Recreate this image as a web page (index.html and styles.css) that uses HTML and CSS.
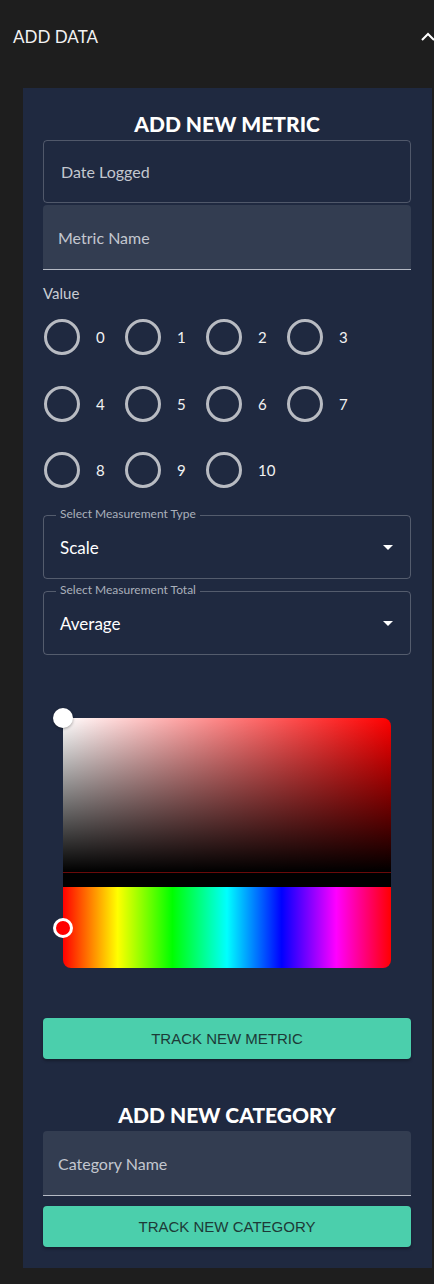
FILE: index.html
```html
<!DOCTYPE html>
<html>
<head>
<meta charset="utf-8">
<link rel="stylesheet" href="styles.css">
</head>
<body>
<div class="accordion">
  <div class="acc-head">
    <span class="acc-title">ADD DATA</span>
    <svg class="chev" width="14" height="10" viewBox="0 0 14 10"><path d="M1 8 L7 2 L13 8" fill="none" stroke="#fff" stroke-width="2"/></svg>
  </div>
  <div class="panel">
    <h2 class="section-title">ADD NEW METRIC</h2>
    <div class="outlined-input"><span class="ph">Date Logged</span></div>
    <div class="filled-input"><span class="ph">Metric Name</span></div>
    <div class="value-label">Value</div>
    <div class="radio-grid">
      <div class="radio"><span class="ring"></span><span class="rlabel">0</span></div>
      <div class="radio"><span class="ring"></span><span class="rlabel">1</span></div>
      <div class="radio"><span class="ring"></span><span class="rlabel">2</span></div>
      <div class="radio"><span class="ring"></span><span class="rlabel">3</span></div>
      <div class="radio"><span class="ring"></span><span class="rlabel">4</span></div>
      <div class="radio"><span class="ring"></span><span class="rlabel">5</span></div>
      <div class="radio"><span class="ring"></span><span class="rlabel">6</span></div>
      <div class="radio"><span class="ring"></span><span class="rlabel">7</span></div>
      <div class="radio"><span class="ring"></span><span class="rlabel">8</span></div>
      <div class="radio"><span class="ring"></span><span class="rlabel">9</span></div>
      <div class="radio"><span class="ring"></span><span class="rlabel">10</span></div>
    </div>
    <div class="select">
      <span class="slabel">Select Measurement Type</span>
      <span class="sval">Scale</span>
      <span class="arrow"></span>
    </div>
    <div class="select">
      <span class="slabel">Select Measurement Total</span>
      <span class="sval">Average</span>
      <span class="arrow"></span>
    </div>
    <div class="picker">
      <div class="sat"><span class="sat-handle"></span></div>
      <div class="band"></div>
      <div class="hue"><span class="hue-handle"></span></div>
    </div>
    <button class="btn btn-metric">TRACK NEW METRIC</button>
    <h2 class="section-title cat-title">ADD NEW CATEGORY</h2>
    <div class="filled-input cat-input"><span class="ph">Category Name</span></div>
    <button class="btn btn-cat">TRACK NEW CATEGORY</button>
  </div>
</div>
</body>
</html>
```
FILE: styles.css
```css
* { box-sizing: border-box; }
body {
  margin: 0;
  background: #1e1e1e;
  font-family: Lato, "Noto Sans", sans-serif;
  color: #fff;
  overflow: hidden;
}
.accordion { width: 434px; }
.acc-head {
  height: 88px;
  display: flex;
  align-items: flex-start;
  justify-content: space-between;
  padding: 26px 0 0 13px;
  overflow: hidden;
}
.acc-title {
  font-size: 17px;
  line-height: 22px;
  color: #f2f2f2;
}
.chev { margin-top: 6px; margin-right: -1px; }
.panel {
  margin: 0 2px 0 23px;
  background: #1f2940;
  padding: 20px 21px 20px 20px;
  height: 1180px;
}
.section-title {
  margin: 0;
  height: 32px;
  line-height: 32px;
  text-align: center;
  font-size: 21px;
  font-weight: 900;
  color: #fff;
}
.outlined-input {
  height: 63px;
  border: 1px solid rgba(255,255,255,0.22);
  border-radius: 4px;
  display: flex;
  align-items: center;
  padding-left: 17px;
}
.ph { font-size: 16px; color: #c3c7cf; }
.filled-input {
  margin-top: 2px;
  height: 65px;
  background: #333d51;
  border-radius: 4px 4px 0 0;
  border-bottom: 1px solid #b5bac4;
  display: flex;
  align-items: center;
  padding-left: 15px;
}
.value-label {
  margin-top: 12px;
  height: 22px;
  line-height: 22px;
  font-size: 15px;
  color: #c9cdd4;
}
.radio-grid {
  display: grid;
  grid-template-columns: repeat(4, 81px);
  grid-template-rows: 66.5px 66.5px 36px;
  margin-top: 15px;
}
.radio { display: flex; align-items: flex-start; }
.ring {
  width: 36px;
  height: 36px;
  margin-left: 1px;
  border: 3px solid #b8bbc2;
  border-radius: 50%;
}
.rlabel {
  margin-left: 16px;
  font-size: 15px;
  line-height: 36px;
  color: #f2f2f2;
}
.select {
  position: relative;
  height: 64px;
  margin-top: 27px;
  border: 1px solid rgba(255,255,255,0.24);
  border-radius: 4px;
  padding-left: 16px;
  display: flex;
  align-items: center;
}
.select + .select { margin-top: 12px; }
.slabel {
  position: absolute;
  left: 12px;
  top: -9px;
  padding: 0 4px;
  background: #1f2940;
  font-size: 12px;
  line-height: 14px;
  color: #aab0bb;
}
.sval { font-size: 17px; color: #fff; }
.arrow {
  position: absolute;
  right: 17px;
  top: 29px;
  width: 0; height: 0;
  border-left: 5px solid transparent;
  border-right: 5px solid transparent;
  border-top: 5px solid #fff;
}
.picker {
  margin: 63px 0 0 20px;
  width: 328px;
}
.sat {
  position: relative;
  height: 155px;
  border-radius: 8px 8px 0 0;
  background:
    linear-gradient(to top, #000, rgba(0,0,0,0)),
    linear-gradient(to right, #fff, #f00);
  border-bottom: 1px solid #6a0a0a;
}
.sat-handle {
  position: absolute;
  left: -10px; top: -10px;
  width: 20px; height: 20px;
  border-radius: 50%;
  background: #fff;
  box-shadow: 0 1px 3px rgba(0,0,0,0.35);
}
.band { height: 14px; background: #000; }
.hue {
  position: relative;
  height: 81px;
  border-radius: 0 0 8px 8px;
  background: linear-gradient(to right, #f00 0%, #ff0 16.67%, #0f0 33.33%, #0ff 50%, #00f 66.67%, #f0f 83.33%, #f00 100%);
}
.hue-handle {
  position: absolute;
  left: -10px; top: 31px;
  width: 20px; height: 20px;
  border-radius: 50%;
  background: #f00;
  border: 3px solid #fff;
}
.btn {
  display: block;
  width: 100%;
  height: 41px;
  border: 0;
  border-radius: 4px;
  background: #4bcfac;
  color: #1d3a37;
  font-family: "Liberation Sans", Arial, sans-serif;
  font-size: 15px;
  box-shadow: 0 2px 3px rgba(0,0,0,0.3);
}
.btn-metric { margin-top: 50px; }
.cat-title { margin-top: 40px; height: 32px; }
.cat-input { margin-top: 0; }
.btn-cat { margin-top: 10px; }
```
